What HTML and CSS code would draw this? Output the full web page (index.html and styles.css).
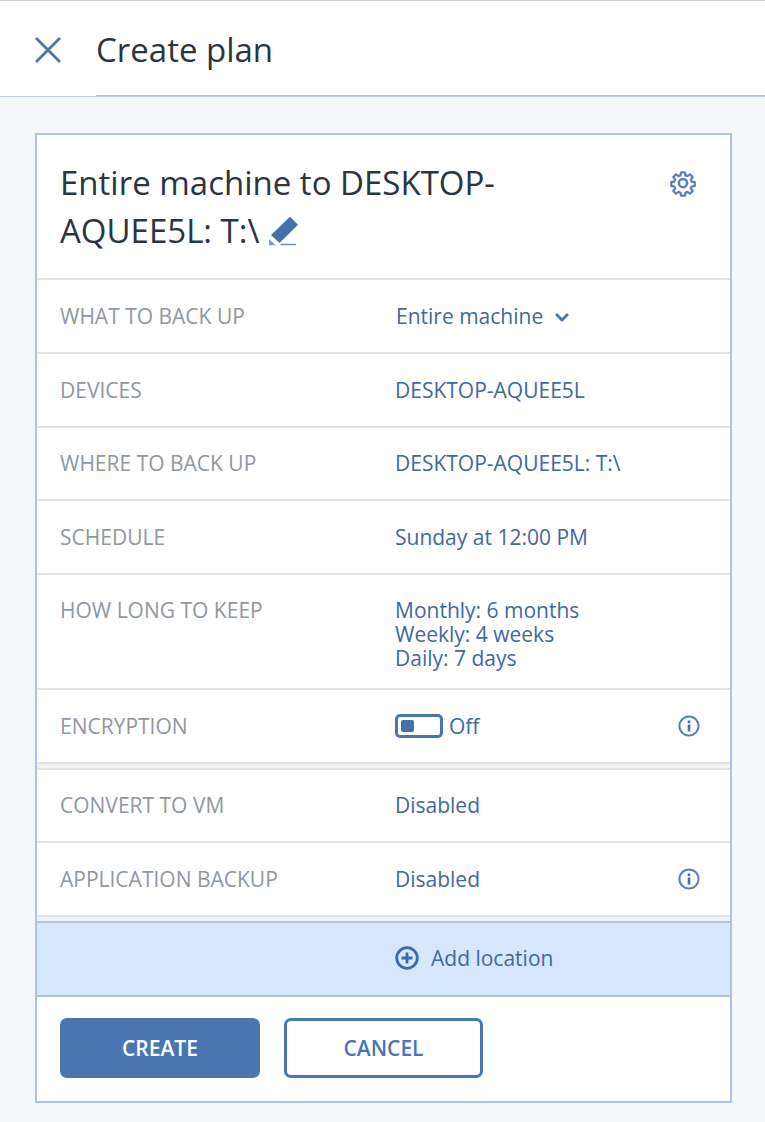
FILE: index.html
```html
<!doctype html>
<html>
<head>
  <link rel="stylesheet" href="styles.css">
</head>
<body>
  <div class="header">
    <svg class="closeIcon" width="28" height="28" viewBox="0 0 28 28"><path d="M2 2 L26 26 M26 2 L2 26" fill="none" stroke="#4a75b1" stroke-width="2.8"/></svg>
    <div class="pageTitle">Create plan</div>
  </div>

  <div class="main">
    <div class="card">
      <div class="cardTitle">
        <div class="planName">Entire machine to DESKTOP-<br>AQUEE5L: T:\
          <svg class="pencil" width="30" height="30" viewBox="0 0 30 30">
            <path d="M22 .7 L30 8.7 L11.5 27 L3 19 Z" fill="#4471ae"/>
            <path d="M1 29.3 L1 23 L7.7 29.3 Z" fill="#7f9dc9"/>
            <path d="M12.5 28.5 H28" stroke="#6c8dbf" stroke-width="1.5"/>
          </svg>
        </div>
        <svg class="gear" width="30" height="30" viewBox="0 0 24 24" fill="none" stroke="#5b80b6" stroke-width="2" stroke-linejoin="round">
          <path d="M10.3 2.5h3.4l.5 2.7 1.7.7 2.3-1.6 2.4 2.4-1.6 2.3.7 1.7 2.7.5v3.4l-2.7.5-.7 1.7 1.6 2.3-2.4 2.4-2.3-1.6-1.7.7-.5 2.7h-3.4l-.5-2.7-1.7-.7-2.3 1.6-2.4-2.4 1.6-2.3-.7-1.7-2.7-.5v-3.4l2.7-.5.7-1.7-1.6-2.3 2.4-2.4 2.3 1.6 1.7-.7z" transform="translate(1.2 1.2) scale(.9)"/>
          <circle cx="12" cy="12" r="3.3"/>
        </svg>
      </div>

      <div class="row">
        <div class="label">WHAT TO BACK UP</div>
        <div class="value selectValue">Entire machine
          <svg class="chevron" width="16" height="10" viewBox="0 0 16 10"><path d="M2 2 L8 8 L14 2" fill="none" stroke="#4a75b1" stroke-width="2.8"/></svg>
        </div>
      </div>
      <div class="row">
        <div class="label">DEVICES</div>
        <div class="value">DESKTOP-AQUEE5L</div>
      </div>
      <div class="row shortRow">
        <div class="label">WHERE TO BACK UP</div>
        <div class="value">DESKTOP-AQUEE5L: T:\</div>
      </div>
      <div class="row">
        <div class="label">SCHEDULE</div>
        <div class="value">Sunday at 12:00 PM</div>
      </div>
      <div class="row tallRow">
        <div class="label">HOW LONG TO KEEP</div>
        <div class="value">Monthly: 6 months<br>Weekly: 4 weeks<br>Daily: 7 days</div>
      </div>
      <div class="row">
        <div class="label">ENCRYPTION</div>
        <div class="value toggleValue"><span class="toggle"><span class="knob"></span></span> Off</div>
        <svg class="info" width="22" height="22" viewBox="0 0 22 22">
          <circle cx="11" cy="11" r="9.6" fill="none" stroke="#5b80b6" stroke-width="2"/>
          <rect x="9.7" y="9.5" width="2.6" height="7" fill="#4471ae"/>
          <rect x="9.7" y="5.5" width="2.6" height="2.6" fill="#4471ae"/>
        </svg>
      </div>
      <div class="gap gapClosed"></div>
      <div class="row shortRow">
        <div class="label">CONVERT TO VM</div>
        <div class="value">Disabled</div>
      </div>
      <div class="row">
        <div class="label">APPLICATION BACKUP</div>
        <div class="value">Disabled</div>
        <svg class="info" width="22" height="22" viewBox="0 0 22 22">
          <circle cx="11" cy="11" r="9.6" fill="none" stroke="#5b80b6" stroke-width="2"/>
          <rect x="9.7" y="9.5" width="2.6" height="7" fill="#4471ae"/>
          <rect x="9.7" y="5.5" width="2.6" height="2.6" fill="#4471ae"/>
        </svg>
      </div>
      <div class="gap"></div>

      <div class="addLocation">
        <svg class="plus" width="24" height="24" viewBox="0 0 24 24">
          <circle cx="12" cy="12" r="10.3" fill="none" stroke="#3f6aa6" stroke-width="2.8"/>
          <path d="M12 6.5 V17.5 M6.5 12 H17.5" stroke="#3f6aa6" stroke-width="2.8"/>
        </svg>
        <span>Add location</span>
      </div>

      <div class="footer">
        <button class="btn btnPrimary">CREATE</button>
        <button class="btn btnOutline">CANCEL</button>
      </div>
    </div>
  </div>
</body>
</html>
```

FILE: styles.css
```css
body {
  margin: 0;
  background-color: #f4f6f9;
  font-family: "Open Sans", "Liberation Sans", sans-serif;
  color: #2b3540;
}
.header {
  display: flex;
  align-items: stretch;
  box-sizing: border-box;
  height: 97px;
  background-color: #ffffff;
  border-top: 1px solid #ccd2da;
  border-bottom: 1px solid #c3d0e3;
  padding-left: 34px;
}
.closeIcon {
  align-self: center;
  width: 28px;
  height: 28px;
  margin: 2px 34px 0 0;
}
.pageTitle {
  flex: 1;
  box-sizing: border-box;
  padding-top: 29px;
  border-bottom: 1px solid #b0c3de;
  font-size: 33px;
  line-height: 40px;
}
.main {
  padding: 36px 33px 19px 35px;
}
.card {
  background-color: #ffffff;
  border: 2px solid #b0c3de;
}
.cardTitle {
  display: flex;
  justify-content: space-between;
  align-items: flex-start;
  box-sizing: border-box;
  height: 145px;
  padding: 24px 32px 0 23px;
  border-bottom: 2px solid #dfe4ea;
}
.planName {
  font-size: 33px;
  line-height: 48px;
}
.pencil {
  vertical-align: -3px;
}
.gear {
  margin-top: 9px;
}
.row {
  display: flex;
  align-items: center;
  box-sizing: border-box;
  height: 74px;
  padding: 0 30px 0 23px;
  border-bottom: 2px solid #dfe4ea;
  font-size: 21px;
}
.shortRow {
  height: 73px;
  padding-bottom: 1px;
}
.tallRow {
  align-items: flex-start;
  height: 115px;
  padding-top: 23px;
}
.label {
  width: 335px;
  flex: none;
  color: #8f979f;
  line-height: 24px;
}
.value {
  flex: 1;
  color: #41689f;
  line-height: 24px;
}
.selectValue {
  padding-left: 1px;
}
.chevron {
  margin-left: 5px;
  vertical-align: 2px;
}
.toggleValue {
  display: flex;
  align-items: center;
  gap: 6px;
}
.toggle {
  display: inline-flex;
  align-items: center;
  box-sizing: border-box;
  width: 48px;
  height: 24px;
  padding-left: 3px;
  background-color: #ffffff;
  border: 3px solid #4a75b1;
  border-radius: 5px;
}
.knob {
  width: 13px;
  height: 12px;
  background-color: #4471ae;
  border-radius: 2px;
}
.gap {
  height: 4px;
  background-color: #f1f3f5;
}
.gapClosed {
  border-bottom: 2px solid #dfe4ea;
}
.addLocation {
  display: flex;
  align-items: center;
  gap: 12px;
  box-sizing: border-box;
  height: 76px;
  padding-left: 358px;
  padding-bottom: 2px;
  background-color: #d6e6fd;
  border-top: 2px solid #b0c3de;
  border-bottom: 2px solid #b0c3de;
  color: #41689f;
  font-size: 21px;
}
.footer {
  display: flex;
  gap: 24px;
  padding: 21px 23px 23px 23px;
}
.btn {
  box-sizing: border-box;
  height: 60px;
  border-radius: 7px;
  font-family: "Open Sans", "Liberation Sans", sans-serif;
  font-size: 21px;
  font-weight: 600;
  cursor: pointer;
}
.btnPrimary {
  width: 200px;
  background-color: #4a75b1;
  border: none;
  color: #ffffff;
}
.btnOutline {
  width: 199px;
  background-color: #ffffff;
  border: 3px solid #4a75b1;
  color: #4a75b1;
}
```
